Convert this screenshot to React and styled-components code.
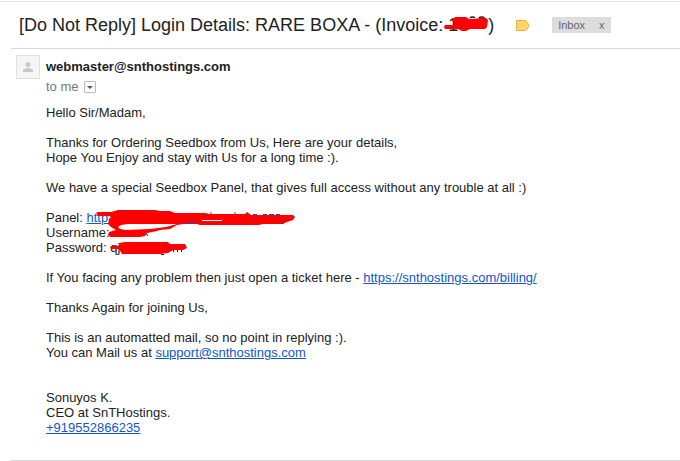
import React from 'react'
import styled, { createGlobalStyle } from 'styled-components'

const App = () => (
  <>
    <GlobalStyle />
    <Page>
      <Header>
        <Subject>
          [Do Not Reply] Login Details: RARE BOXA - (Invoice: 1
          <HiddenNumber>
            <SubjectMarker />
          </HiddenNumber>
          )
        </Subject>
        <TagButton type="button" aria-label="Mark as important">
          <svg width="14" height="11" viewBox="0 0 14 11">
            <path
              d="M.5.5h9.3l3.6 5-3.6 5H.5z"
              fill="#ffd56b"
              stroke="#e3b04b"
            />
          </svg>
        </TagButton>
        <Label>
          Inbox
          <LabelClose type="button" aria-label="Remove label Inbox">
            x
          </LabelClose>
        </Label>
      </Header>

      <Message>
        <Avatar>
          <svg width="10" height="10" viewBox="0 0 10 10">
            <circle cx="5" cy="2.5" r="2.5" fill="#c8c8c8" />
            <path d="M0 10V8.500C0 6.900 3 6 5 6s5 .9 5 2.500V10z" fill="#c8c8c8" />
          </svg>
        </Avatar>
        <Content>
          <Sender>webmaster@snthostings.com</Sender>
          <Recipient>
            to me
            <DetailsButton type="button" aria-label="Show details">
              <svg width="6" height="3" viewBox="0 0 6 3">
                <path d="M0 0h6L3 3z" fill="#555" />
              </svg>
            </DetailsButton>
          </Recipient>

          <Body>
            <p>Hello Sir/Madam,</p>
            <p>
              Thanks for Ordering Seedbox from Us, Here are your details,
              <br />
              Hope You Enjoy and stay with Us for a long time :).
            </p>
            <p>
              We have a special Seedbox Panel, that gives full access without
              any trouble at all :)
            </p>
            <Credentials>
              Panel: <Link href="#panel">http</Link>
              <br />
              Username:
              <br />
              Password: qj
              <CredentialsMarker />
            </Credentials>
            <p>
              If You facing any problem then just open a ticket here -{' '}
              <Link href="https://snthostings.com/billing/">
                https://snthostings.com/billing/
              </Link>
            </p>
            <p>Thanks Again for joining Us,</p>
            <p>
              This is an automatted mail, so no point in replying :).
              <br />
              You can Mail us at{' '}
              <Link href="mailto:support@snthostings.com">
                support@snthostings.com
              </Link>
            </p>
            <Signature>
              Sonuyos K.
              <br />
              CEO at SnTHostings.
              <br />
              <Link href="tel:+919552866235">+919552866235</Link>
            </Signature>
          </Body>
        </Content>
      </Message>
    </Page>
  </>
)

const SubjectMarker = () => (
  <svg width="44" height="24" viewBox="0 0 44 24" aria-hidden="true">
    <path
      d="M11 5h3M26 5c1-1.500 4-1.500 5 0M35 5c1-1.500 4-1.500 5.500 0"
      fill="none"
      stroke="#222"
      strokeWidth="1.500"
    />
    <path
      d="M1 12H10V9L8 8V6L12 4H22L25 6H30L36 5H42L44 7L43 14L41 16H26L22 18H18L14 16H1L0 14z"
      fill="red"
    />
  </svg>
)

const CredentialsMarker = () => (
  <svg width="250" height="50" viewBox="0 0 250 50" aria-hidden="true">
    <path
      d="M60 13.500H238M165 2V4M189 2V4M207 4.500H211M217 4.500H221M223 4.500H228M230 4.500H234"
      fill="none"
      stroke="#15c"
    />
    <path
      d="M99 22L102 26M127.500 40V42M131.500 40V42M135.500 40V42M115 44.500H118"
      fill="none"
      stroke="#222"
    />
    {/* panel and username are struck out in one go */}
    <path
      fillRule="evenodd"
      d="M50 3L52 2H65L72 0H109L114 1H124L129 3H159L164 4H199L201 2L205 5H247L249 7L247 10L241 12L236 14H217L213 15H154L148 13H144L131 15L124 19L114 20L111 21L101 23L99 26L94 27H64L62 25L63 22L70 20L65 17L62 14L63 9L65 7L63 6H52zM72 17L74 19L80 20L104 19L120 17L131 14H82L75 15zM156 10V11H176V10z"
      fill="red"
    />
    <path
      d="M64 37L66 36H73V33L79 32H122L124 34H139L141 38L137 40H127L122 43L114 44H76L73 39H65z"
      fill="red"
    />
  </svg>
)

const GlobalStyle = createGlobalStyle`
  * {
    box-sizing: border-box;
  }

  body {
    background: #fff;
    color: #222;
    font-family: 'Liberation Sans', Arial, sans-serif;
    margin: 0;
  }
`

const Page = styled.main`
  border-top: 1px solid #e5e5e5;
  margin-top: 1px;
  padding-left: 11px;
`

const Header = styled.header`
  align-items: center;
  border-bottom: 1px solid #d8d8d8;
  display: flex;
  height: 47px;
  padding-left: 8px;
`

const Subject = styled.h1`
  font-size: 18px;
  font-weight: normal;
  line-height: 24px;
  margin: 0;
  white-space: nowrap;
`

const HiddenNumber = styled.span`
  display: inline-block;
  height: 24px;
  position: relative;
  vertical-align: top;
  width: 30px;

  > svg {
    pointer-events: none;
    position: absolute;
    right: 0;
    top: 0;
  }
`

const buttonReset = `
  align-items: center;
  background: none;
  border: 0;
  color: inherit;
  cursor: pointer;
  display: flex;
  font: inherit;
  justify-content: center;
  padding: 0;
`

const TagButton = styled.button`
  ${buttonReset};
  margin: 0 22px;
`

const Label = styled.div`
  align-items: center;
  background: #ddd;
  color: #666;
  display: flex;
  font-size: 11px;
  gap: 14px;
  height: 16px;
  padding: 0 6px;
`

const LabelClose = styled.button`
  ${buttonReset};
`

const Message = styled.article`
  border-bottom: 1px solid #d8d8d8;
  display: flex;
  gap: 6px;
  padding: 6px 0 25px 5px;
`

const Avatar = styled.div`
  align-items: center;
  background: #f5f5f5;
  border: 1px solid #e0e0e0;
  display: flex;
  flex: none;
  height: 24px;
  justify-content: center;
  width: 24px;
`

const Content = styled.div`
  flex: 1;
  font-size: 13px;
`

const Sender = styled.div`
  font-weight: bold;
  line-height: 24px;
`

const Recipient = styled.div`
  align-items: center;
  color: #777;
  display: flex;
  gap: 5px;
  line-height: 16px;
`

const DetailsButton = styled.button`
  ${buttonReset};
  border: 1px solid #bbb;
  border-radius: 1px;
  height: 12px;
  width: 12px;
`

const Body = styled.div`
  line-height: 15px;
  padding-top: 10px;

  > p {
    margin: 0 0 15px;
  }
`

const Credentials = styled.p`
  position: relative;

  > svg {
    left: 0;
    pointer-events: none;
    position: absolute;
    top: 0;
  }
`

const Signature = styled.div`
  padding-top: 15px;
`

const Link = styled.a`
  color: #15c;
  text-decoration: underline;
`

export default App
